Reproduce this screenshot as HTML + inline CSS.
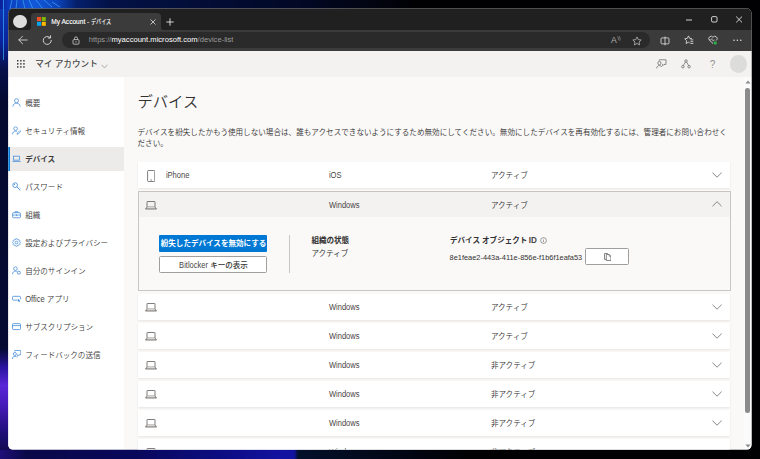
<!DOCTYPE html>
<html lang="ja">
<head>
<meta charset="utf-8">
<title>My Account - デバイス</title>
<style>
*{box-sizing:border-box;margin:0;padding:0}
html,body{width:760px;height:459px;overflow:hidden}
body{position:relative;background:#010103;font-family:"Liberation Sans","Noto Sans CJK JP",sans-serif;color:#323130}
.abs{position:absolute}
#desk{position:absolute;left:0;top:0;width:760px;height:459px;overflow:hidden}
#win{position:absolute;left:8px;top:8px;width:743.5px;height:441.5px;overflow:hidden;background:#faf9f8;clip-path:inset(0.6px 0 0 0.3px round 4.5px)}
/* everything inside #win is positioned relative to window (offset 8,8) */
#tabstrip{position:absolute;left:0;top:0;width:744px;height:22px;background:#202020}
#toolbar{position:absolute;left:0;top:22px;width:744px;height:20.8px;background:#3b3b3b}
#tab{position:absolute;left:23px;top:4.8px;width:130.2px;height:18px;background:#3b3b3b;border-radius:4px 4px 0 0}
.t{position:absolute;white-space:nowrap;line-height:1}
#apphdr{position:absolute;left:0;top:42.8px;width:744px;height:26.4px;background:#f3f2f1}
#side{position:absolute;left:0;top:69.2px;width:116.4px;height:373px;background:#fff}
#main{position:absolute;left:116.4px;top:69.2px;width:619.5px;height:373px;background:#faf9f8}
#sbar{position:absolute;left:735.5px;top:69.2px;width:8.5px;height:373px;background:#fbfbfb}
.nav{position:absolute;left:0;width:116px;height:24px}
.nav .t{left:17.2px;top:9.1px;font-size:7.55px;color:#3b3a39;font-weight:350}
.nav svg{position:absolute;left:4.3px;top:7.3px;width:9px;height:9px}
.card{position:absolute;left:129.9px;width:592.1px;height:25.8px;background:#fff;box-shadow:0 0.3px 0.9px rgba(0,0,0,.10),0 0.8px 1.8px rgba(0,0,0,.08)}
.card .t{top:10.3px;font-size:7.55px;color:#323130;font-weight:350}
.lo .t{top:10.4px !important}
.lat{color:#484644;display:inline-block;transform:scaleY(1.1);transform-origin:50% 78%}
.c1{left:28px}.c2{left:191px}.c3{left:353px}
.card svg.chev{position:absolute;left:573.8px;top:10.1px;width:10px;height:6px}
.lo svg.chev{top:9.8px}
.card svg.lap{position:absolute;left:7.3px;top:9.5px;width:12px;height:9px}
</style>
</head>
<body>
<div id="desk">
  <svg class="abs" style="left:0;top:0" width="760" height="459" viewBox="0 0 760 459">
    <defs>
      <linearGradient id="gtop" gradientUnits="userSpaceOnUse" x1="0" y1="0" x2="760" y2="0">
        <stop offset="0" stop-color="#0a1f9a"/><stop offset="0.013" stop-color="#0b3fc0"/><stop offset="0.045" stop-color="#1358da"/><stop offset="0.075" stop-color="#0c44bc"/>
        <stop offset="0.1" stop-color="#05206c"/><stop offset="0.145" stop-color="#031146"/><stop offset="0.4" stop-color="#020824"/><stop offset="0.55" stop-color="#010103"/><stop offset="1" stop-color="#010103"/>
      </linearGradient>
      <linearGradient id="gleft" gradientUnits="userSpaceOnUse" x1="0" y1="0" x2="0" y2="459">
        <stop offset="0" stop-color="#0b3ab8"/><stop offset="0.09" stop-color="#0a24a0"/><stop offset="0.15" stop-color="#06104c"/><stop offset="0.22" stop-color="#040a30"/>
        <stop offset="0.76" stop-color="#050a32"/><stop offset="0.8" stop-color="#2a14a0"/><stop offset="0.84" stop-color="#5a26d8"/><stop offset="0.89" stop-color="#4119b2"/><stop offset="0.95" stop-color="#1c0d70"/><stop offset="1" stop-color="#0a0840"/>
      </linearGradient>
      <linearGradient id="gbot" gradientUnits="userSpaceOnUse" x1="0" y1="0" x2="760" y2="0">
        <stop offset="0" stop-color="#1e0e78"/><stop offset="0.035" stop-color="#0a0848"/><stop offset="0.18" stop-color="#08085c"/><stop offset="0.3" stop-color="#0d0d86"/><stop offset="0.375" stop-color="#1313a2"/><stop offset="0.387" stop-color="#1212a0"/>
        <stop offset="0.392" stop-color="#03102a"/><stop offset="0.53" stop-color="#020614"/><stop offset="0.62" stop-color="#010103"/><stop offset="1" stop-color="#010103"/>
      </linearGradient>
    </defs>
    <rect x="0" y="0" width="760" height="459" fill="#010103"/>
    <rect x="0" y="0" width="760" height="12" fill="url(#gtop)"/>
    <rect x="0" y="446" width="760" height="13" fill="url(#gbot)"/>
    <rect x="0" y="9" width="12" height="441" fill="url(#gleft)"/>
    <g stroke="#38a0f0" stroke-width="0.9" fill="none" opacity="0.85">
      <path d="M3.5 0V60"/><path d="M12 0L10 9"/><path d="M17 0L16 9"/><path d="M23 0L25 9"/><path d="M29 0L33 9"/><path d="M36 0L43 9"/><path d="M44 0L52 7"/><path d="M52 2L60 7"/>
    </g>
  </svg>
</div>

<div id="win">
  <div id="tabstrip"></div>
  <div id="toolbar"></div>
  <!-- profile circle -->
  <div class="abs" style="left:5.1px;top:6.8px;width:13.5px;height:13.5px;border-radius:50%;background:#dcdcdc"></div>
  <div id="tab"></div>
  <svg class="abs" style="left:20px;top:19px" width="3" height="3" viewBox="0 0 3 3"><path d="M3 0V3H0A3 3 0 0 0 3 0Z" fill="#3b3b3b"/></svg>
  <svg class="abs" style="left:153.2px;top:19px" width="3" height="3" viewBox="0 0 3 3"><path d="M0 0V3H3A3 3 0 0 1 0 0Z" fill="#3b3b3b"/></svg>
  <!-- favicon -->
  <svg class="abs" style="left:29px;top:9px" width="9" height="9" viewBox="0 0 9 9">
    <rect x="0" y="0" width="4" height="4" fill="#f25022"/><rect x="4.8" y="0" width="4" height="4" fill="#7fba00"/>
    <rect x="0" y="4.8" width="4" height="4" fill="#00a4ef"/><rect x="4.8" y="4.8" width="4" height="4" fill="#ffb900"/>
  </svg>
  <div class="t" style="left:43.2px;top:11px;font-size:6.6px;color:#fff;-webkit-text-stroke:0.12px #fff">My Account - <span style="display:inline-block;transform:scaleX(0.77);transform-origin:0 50%">デバイス</span></div>
  <svg class="abs" style="left:141.6px;top:10.7px" width="6" height="6" viewBox="0 0 6 6"><path d="M0.5 0.5L5.5 5.5M5.5 0.5L0.5 5.5" stroke="#e0e0e0" stroke-width="0.8" fill="none"/></svg>
  <svg class="abs" style="left:158.3px;top:9.6px" width="8" height="8" viewBox="0 0 8 8"><path d="M4 0.3V7.7M0.3 4H7.7" stroke="#e8e8e8" stroke-width="0.9" fill="none"/></svg>
  <!-- window controls -->
  <svg class="abs" style="left:677px;top:7px" width="60" height="10" viewBox="0 0 60 10">
    <path d="M1 5H7" stroke="#fff" stroke-width="0.8" fill="none"/>
    <rect x="26.6" y="1.6" width="5.4" height="5.4" rx="1.1" stroke="#fff" stroke-width="0.8" fill="none"/>
    <path d="M51.2 1.6L57 7.4M57 1.6L51.2 7.4" stroke="#fff" stroke-width="0.8" fill="none"/>
  </svg>

  <!-- toolbar icons -->
  <svg class="abs" style="left:10px;top:27px" width="10" height="10" viewBox="0 0 10 10"><path d="M0.8 5H9.2M4.6 1.2L0.8 5L4.6 8.8" stroke="#d4d4d4" stroke-width="0.9" fill="none" stroke-linecap="round" stroke-linejoin="round"/></svg>
  <svg class="abs" style="left:33.7px;top:27.2px" width="10.8" height="10.8" viewBox="0 0 10 10"><path d="M8.6 5A3.7 3.7 0 1 1 7.3 2.2" stroke="#d4d4d4" stroke-width="0.9" fill="none" stroke-linecap="round"/><path d="M7.9 0.7V2.8H5.8" stroke="#d4d4d4" stroke-width="0.9" fill="none" stroke-linecap="round" stroke-linejoin="round"/></svg>
  <!-- address bar -->
  <div class="abs" style="left:54.3px;top:24.2px;width:587.5px;height:16px;border-radius:8px;background:#2a2a2a"></div>
  <svg class="abs" style="left:63.7px;top:27.7px" width="8" height="9" viewBox="0 0 8 9"><rect x="1" y="3.6" width="6" height="4.6" rx="1" stroke="#d0d0d0" stroke-width="0.8" fill="none"/><path d="M2.5 3.6V2.4A1.5 1.5 0 0 1 5.5 2.4V3.6" stroke="#d0d0d0" stroke-width="0.8" fill="none"/><circle cx="4" cy="5.9" r="0.6" fill="#d0d0d0"/></svg>
  <div class="t" style="left:80.7px;top:28.2px;font-size:7.6px;color:#9a9a9a">https://<span style="color:#fff">myaccount.microsoft.com</span>/device-list</div>
  <!-- read aloud A -->
  <div class="t" style="left:603px;top:28px;font-size:8.6px;color:#b4b4b4">A</div><svg class="abs" style="left:608.5px;top:27.5px" width="4" height="5" viewBox="0 0 4 5"><path d="M0.6 0.8C1.4 1.6 1.6 2.6 1.3 3.8M2 0.2C3.2 1.4 3.4 2.8 3 4.4" stroke="#b4b4b4" stroke-width="0.55" fill="none" stroke-linecap="round"/></svg>
  <svg class="abs" style="left:623.6px;top:28.2px" width="10" height="10" viewBox="0 0 11 11"><path d="M5.5 1L6.9 4L10.1 4.4L7.7 6.6L8.4 9.8L5.5 8.2L2.6 9.8L3.3 6.6L0.9 4.4L4.1 4Z" stroke="#bdbdbd" stroke-width="0.85" fill="none" stroke-linejoin="round"/></svg>
  <!-- split -->
  <svg class="abs" style="left:651.7px;top:27.6px" width="10" height="10" viewBox="0 0 10 10"><rect x="1" y="1.9" width="8" height="6" rx="1.1" stroke="#dcdcdc" stroke-width="0.85" fill="none"/><path d="M5 0.5V9.3" stroke="#dcdcdc" stroke-width="0.85"/></svg>
  <!-- favorites -->
  <svg class="abs" style="left:675.6px;top:27.4px" width="12" height="11" viewBox="0 0 12 11"><path d="M7.6 3.6L5.7 3.4L4.5 0.9L3.3 3.4L0.7 3.8L2.6 5.7L2.1 8.5L4.5 7.2L5.4 7.7" stroke="#e0e0e0" stroke-width="0.85" fill="none" stroke-linejoin="round" stroke-linecap="round"/><path d="M6.4 4.9H9.3M6.4 6.7H9.3M6.4 8.5H9.3" stroke="#e0e0e0" stroke-width="0.8"/></svg>
  <!-- heart -->
  <svg class="abs" style="left:699.6px;top:27.4px" width="11" height="11" viewBox="0 0 11 11"><path d="M5 8.6L1.2 4.9A2.2 2.2 0 0 1 5 2.3A2.2 2.2 0 0 1 8.8 4.9L8.2 5.5" stroke="#e0e0e0" stroke-width="0.85" fill="none" stroke-linejoin="round"/><path d="M1 5H3L3.9 3.6L5 6.2L5.8 5H6.8" stroke="#e0e0e0" stroke-width="0.55" fill="none"/><circle cx="7.2" cy="8" r="1.8" fill="#2fa84a"/></svg>
  <!-- more -->
  <svg class="abs" style="left:724.8px;top:31px" width="9" height="3" viewBox="0 0 9 3"><circle cx="1" cy="1.3" r="0.75" fill="#e6e6e6"/><circle cx="4.4" cy="1.3" r="0.75" fill="#e6e6e6"/><circle cx="7.8" cy="1.3" r="0.75" fill="#e6e6e6"/></svg>

  <!-- app header -->
  <div id="apphdr"></div>
  <svg class="abs" style="left:8.5px;top:52px" width="8" height="8" viewBox="0 0 8 8" fill="#3b3a39">
    <rect x="0" y="0" width="1.5" height="1.5"/><rect x="3.1" y="0" width="1.5" height="1.5"/><rect x="6.2" y="0" width="1.5" height="1.5"/>
    <rect x="0" y="3.1" width="1.5" height="1.5"/><rect x="3.1" y="3.1" width="1.5" height="1.5"/><rect x="6.2" y="3.1" width="1.5" height="1.5"/>
    <rect x="0" y="6.2" width="1.5" height="1.5"/><rect x="3.1" y="6.2" width="1.5" height="1.5"/><rect x="6.2" y="6.2" width="1.5" height="1.5"/>
  </svg>
  <div class="t" style="left:27.2px;top:52px;font-size:8.6px;font-weight:500;color:#4a4948">マイ アカウント</div>
  <svg class="abs" style="left:93px;top:55.5px" width="7" height="5" viewBox="0 0 7 5"><path d="M0.5 0.7L3.5 3.9L6.5 0.7" stroke="#8a8886" stroke-width="0.7" fill="none"/></svg>
  <!-- header right icons -->
  <svg class="abs" style="left:647.6px;top:51.4px" width="11" height="10" viewBox="0 0 11 10"><circle cx="3.4" cy="4.1" r="1.6" stroke="#605e5c" stroke-width="0.7" fill="none"/><path d="M0.6 9.4C0.9 7.4 2 6.6 3.4 6.6C4.6 6.6 5.4 7.1 5.9 8" stroke="#605e5c" stroke-width="0.7" fill="none"/><path d="M3.2 1.6V0.8H10V5.4H8L6.6 6.8V5.4H6" stroke="#605e5c" stroke-width="0.7" fill="none" stroke-linejoin="round"/></svg>
  <svg class="abs" style="left:673.4px;top:51.4px" width="10" height="10" viewBox="0 0 10 10"><circle cx="5" cy="2" r="1.25" stroke="#605e5c" stroke-width="0.7" fill="none"/><circle cx="1.9" cy="7.7" r="1.25" stroke="#605e5c" stroke-width="0.7" fill="none"/><circle cx="8.1" cy="7.7" r="1.25" stroke="#605e5c" stroke-width="0.7" fill="none"/><path d="M4.4 3.1L2.4 6.5M5.6 3.1L7.6 6.5" stroke="#605e5c" stroke-width="0.7" fill="none"/></svg>
  <div class="t" style="left:701.8px;top:51.6px;font-size:10px;color:#95928f">?</div>
  <div class="abs" style="left:721.7px;top:47.4px;width:17.7px;height:17.7px;border-radius:50%;background:#dcdcdb"></div>

  <!-- sidebar -->
  <div id="side">
    <div class="nav" style="top:13.5px"><svg viewBox="0 0 10 10"><circle cx="5" cy="3" r="2.2" stroke="#2f80d6" stroke-width="0.75" fill="none"/><path d="M1 9.6C1 7 2.8 5.8 5 5.8S9 7 9 9.6" stroke="#2f80d6" stroke-width="0.75" fill="none"/></svg><div class="t">概要</div></div>
    <div class="nav" style="top:41.5px"><svg viewBox="0 0 10 10"><circle cx="4" cy="3" r="2" stroke="#2f80d6" stroke-width="0.75" fill="none"/><path d="M0.6 9.2C0.6 7 2 5.8 4 5.8C4.6 5.8 5 5.9 5.4 6" stroke="#2f80d6" stroke-width="0.75" fill="none"/><path d="M5.6 9.4L6 7.8L8.8 5L9.8 6L7 8.8Z" stroke="#2f80d6" stroke-width="0.7" fill="none" stroke-linejoin="round"/></svg><div class="t">セキュリティ情報</div></div>
    <div class="nav" style="top:69.5px;background:#edebe9"><div class="abs" style="left:0;top:0;width:2px;height:24px;background:#0078d4"></div><svg viewBox="0 0 10 10"><rect x="1.6" y="2.4" width="6.8" height="4.4" stroke="#2f80d6" stroke-width="0.75" fill="none"/><path d="M0.4 8.3H9.6" stroke="#2f80d6" stroke-width="0.75"/></svg><div class="t" style="font-weight:bold">デバイス</div></div>
    <div class="nav" style="top:97.5px"><svg viewBox="0 0 10 10"><circle cx="3.5" cy="3.5" r="2.6" stroke="#2f80d6" stroke-width="0.85" fill="none"/><circle cx="2.8" cy="2.8" r="0.6" fill="#2f80d6"/><path d="M5.4 5.4L9.2 9.2M7.2 7.2L8.2 6.2M8.4 8.4L9.3 7.5" stroke="#2f80d6" stroke-width="0.85" fill="none"/></svg><div class="t">パスワード</div></div>
    <div class="nav" style="top:125.5px"><svg viewBox="0 0 10 10"><rect x="0.7" y="3" width="8.6" height="5.6" rx="0.9" stroke="#2f80d6" stroke-width="0.8" fill="none"/><path d="M3.5 3V1.8H6.5V3M0.7 5.6H4.2M5.8 5.6H9.3" stroke="#2f80d6" stroke-width="0.75" fill="none"/><rect x="4.2" y="4.9" width="1.6" height="1.5" fill="#2f80d6"/></svg><div class="t">組織</div></div>
    <div class="nav" style="top:153.5px"><svg viewBox="0 0 10 10"><circle cx="5" cy="5" r="1.5" stroke="#2f80d6" stroke-width="0.75" fill="none"/><path d="M5 0.8L6.2 1.1L6.7 2.2L7.9 2.1L8.8 3L8.6 4.2L9.4 5L8.6 5.8L8.8 7L7.9 7.9L6.7 7.8L6.2 8.9L5 9.2L3.8 8.9L3.3 7.8L2.1 7.9L1.2 7L1.4 5.8L0.6 5L1.4 4.2L1.2 3L2.1 2.1L3.3 2.2L3.8 1.1Z" stroke="#2f80d6" stroke-width="0.75" fill="none" stroke-linejoin="round"/></svg><div class="t">設定およびプライバシー</div></div>
    <div class="nav" style="top:181.5px"><svg viewBox="0 0 10 10"><circle cx="3.8" cy="2.9" r="2" stroke="#2f80d6" stroke-width="0.75" fill="none"/><path d="M0.5 9.2C0.5 7 1.9 5.8 3.8 5.8C4.5 5.8 5 5.9 5.4 6.1" stroke="#2f80d6" stroke-width="0.75" fill="none"/><circle cx="7.6" cy="7.4" r="1.7" stroke="#2f80d6" stroke-width="0.8" fill="none"/></svg><div class="t">自分のサインイン</div></div>
    <div class="nav" style="top:209.5px"><svg viewBox="0 0 10 10"><path d="M5.6 6.8H1.6A1 1 0 0 1 0.6 5.8V3.6A1 1 0 0 1 1.6 2.6H8.4A1 1 0 0 1 9.4 3.6V5.8" stroke="#2f80d6" stroke-width="0.8" fill="none"/><path d="M6.4 5.2V8.6L7.3 7.9L8 9.3L8.7 9L8.1 7.6H9.2Z" fill="#2f80d6"/></svg><div class="t"><span class="lat">Office</span> アプリ</div></div>
    <div class="nav" style="top:237.5px"><svg viewBox="0 0 10 10"><rect x="0.6" y="1.8" width="8.8" height="6.6" rx="1" stroke="#2f80d6" stroke-width="0.8" fill="none"/><path d="M0.6 4H9.4" stroke="#2f80d6" stroke-width="0.8"/></svg><div class="t">サブスクリプション</div></div>
    <div class="nav" style="top:265.5px"><svg viewBox="0 0 10 10"><circle cx="3.2" cy="4.4" r="1.7" stroke="#2f80d6" stroke-width="0.75" fill="none"/><path d="M0.4 10C0.4 7.9 1.6 7 3.2 7C4.4 7 5.2 7.5 5.7 8.4" stroke="#2f80d6" stroke-width="0.75" fill="none"/><path d="M3 1.6V0.6H9.7V5.4H7.6L6.2 6.9V5.4H5.6" stroke="#2f80d6" stroke-width="0.75" fill="none" stroke-linejoin="round"/></svg><div class="t">フィードバックの送信</div></div>
  </div>

  <!-- main -->
  <div id="main"></div>
  <div class="t" style="left:129.5px;top:85.5px;font-size:15.3px;font-weight:350;color:#323130">デバイス</div>
  <div class="t" style="left:129.5px;top:120px;font-size:7.55px;line-height:10.9px;letter-spacing:0.03px;font-weight:350;color:#323130;white-space:normal;width:594px">デバイスを紛失したかもう使用しない場合は、誰もアクセスできないようにするため無効にしてください。無効にしたデバイスを再有効化するには、管理者にお問い合わせください。</div>

  <!-- row 1 -->
  <div class="card" style="top:154.2px">
    <svg class="abs" style="left:8.8px;top:7.4px" width="8.4" height="12" viewBox="0 0 8.4 12"><rect x="0.6" y="0.5" width="7.2" height="11" rx="0.9" stroke="#55524f" stroke-width="0.75" fill="none"/><path d="M3.4 10H5" stroke="#55524f" stroke-width="0.7"/></svg>
    <div class="t c1"><span class="lat">iPhone</span></div><div class="t c2"><span class="lat">iOS</span></div><div class="t c3">アクティブ</div>
    <svg class="chev" viewBox="0 0 10 6"><path d="M0.5 0.7L5.05 5.2L9.6 0.7" stroke="#605e5c" stroke-width="0.75" fill="none"/></svg>
  </div>
  <!-- expanded -->
  <div class="abs" style="left:130px;top:182.5px;width:593px;height:100.5px;background:#faf9f8;border:1px solid #c8c6c4">
    <div class="abs" style="left:0;top:0;width:591px;height:25.5px;background:#f3f2f1"></div>
  </div>
  <div class="card" style="top:183.5px;background:none;box-shadow:none">
    <svg class="lap" viewBox="0 0 12 9"><rect x="2" y="0.5" width="8" height="5.6" rx="0.4" stroke="#55524f" stroke-width="0.75" fill="none"/><path d="M2 6.1L0.5 8H11.5L10 6.1" stroke="#55524f" stroke-width="0.75" fill="#d8d6d4" stroke-linejoin="round"/></svg>
    <div class="t c2"><span class="lat">Windows</span></div><div class="t c3">アクティブ</div>
    <svg class="chev" style="top:9.7px" viewBox="0 0 10 6"><path d="M0.5 5.2L5.05 0.7L9.6 5.2" stroke="#605e5c" stroke-width="0.75" fill="none"/></svg>
  </div>
  <div class="abs" style="left:151.3px;top:226.5px;width:108.2px;height:17px;background:#0078d4;border-radius:1px"></div>
  <div class="t" style="left:151.5px;top:231.6px;width:108px;text-align:center;font-size:7.55px;font-weight:bold;color:#fff">紛失したデバイスを無効にする</div>
  <div class="abs" style="left:151.3px;top:248.2px;width:108.2px;height:16.8px;background:#fff;border:0.9px solid #a19f9d;border-radius:1.5px"></div>
  <div class="t" style="left:151.5px;top:253.6px;width:108px;text-align:center;font-size:7.55px;font-weight:500;color:#323130"><span class="lat">Bitlocker</span> キーの表示</div>
  <div class="abs" style="left:280.5px;top:226.5px;width:1px;height:38.5px;background:#c8c6c4"></div>
  <div class="t" style="left:303.4px;top:228.5px;font-size:7.55px;font-weight:bold;color:#323130">組織の状態</div>
  <div class="t" style="left:303.4px;top:242.3px;font-size:7.55px;color:#323130">アクティブ</div>
  <div class="t" style="left:442px;top:229px;font-size:7.55px;font-weight:bold;color:#323130">デバイス オブジェクト <span class="lat" style="transform:scale(1.08,1.15)">ID</span></div>
  <svg class="abs" style="left:531.5px;top:228.5px" width="7" height="7" viewBox="0 0 7 7"><circle cx="3.5" cy="3.5" r="2.9" stroke="#605e5c" stroke-width="0.6" fill="none"/><path d="M3.5 3.1V5.1" stroke="#605e5c" stroke-width="0.6"/><circle cx="3.5" cy="2.1" r="0.4" fill="#605e5c"/></svg>
  <div class="t" style="left:441.6px;top:245.6px;font-size:7.4px;color:#323130">8e1feae2-443a-411e-856e-f1b6f1eafa53</div>
  <div class="abs" style="left:577.4px;top:240px;width:43.4px;height:17.4px;background:#fff;border:0.9px solid #a19f9d;border-radius:1.5px"></div>
  <svg class="abs" style="left:595.8px;top:244.8px" width="7.4" height="8" viewBox="0 0 7.4 8"><path d="M2.2 6.4H0.5V0.5H3.6L4.4 1.3" stroke="#484644" stroke-width="0.65" fill="none" stroke-linejoin="round"/><path d="M2.3 1.5H5.2L6.9 3.2V7.5H2.3Z" stroke="#484644" stroke-width="0.65" fill="#fff" stroke-linejoin="round"/><path d="M5.2 1.5V3.2H6.9" stroke="#484644" stroke-width="0.5" fill="none"/></svg>

  <!-- rows 3..8 -->
  <div class="card lo" style="top:285.9px"><svg class="lap" viewBox="0 0 12 9"><rect x="2" y="0.5" width="8" height="5.6" rx="0.4" stroke="#55524f" stroke-width="0.75" fill="none"/><path d="M2 6.1L0.5 8H11.5L10 6.1" stroke="#55524f" stroke-width="0.75" fill="#d8d6d4" stroke-linejoin="round"/></svg><div class="t c2"><span class="lat">Windows</span></div><div class="t c3">アクティブ</div><svg class="chev" viewBox="0 0 10 6"><path d="M0.5 0.7L5.05 5.2L9.6 0.7" stroke="#605e5c" stroke-width="0.75" fill="none"/></svg></div>
  <div class="card lo" style="top:314.9px"><svg class="lap" viewBox="0 0 12 9"><rect x="2" y="0.5" width="8" height="5.6" rx="0.4" stroke="#55524f" stroke-width="0.75" fill="none"/><path d="M2 6.1L0.5 8H11.5L10 6.1" stroke="#55524f" stroke-width="0.75" fill="#d8d6d4" stroke-linejoin="round"/></svg><div class="t c2"><span class="lat">Windows</span></div><div class="t c3">アクティブ</div><svg class="chev" viewBox="0 0 10 6"><path d="M0.5 0.7L5.05 5.2L9.6 0.7" stroke="#605e5c" stroke-width="0.75" fill="none"/></svg></div>
  <div class="card lo" style="top:343.9px"><svg class="lap" viewBox="0 0 12 9"><rect x="2" y="0.5" width="8" height="5.6" rx="0.4" stroke="#55524f" stroke-width="0.75" fill="none"/><path d="M2 6.1L0.5 8H11.5L10 6.1" stroke="#55524f" stroke-width="0.75" fill="#d8d6d4" stroke-linejoin="round"/></svg><div class="t c2"><span class="lat">Windows</span></div><div class="t c3">非アクティブ</div><svg class="chev" viewBox="0 0 10 6"><path d="M0.5 0.7L5.05 5.2L9.6 0.7" stroke="#605e5c" stroke-width="0.75" fill="none"/></svg></div>
  <div class="card lo" style="top:372.9px"><svg class="lap" viewBox="0 0 12 9"><rect x="2" y="0.5" width="8" height="5.6" rx="0.4" stroke="#55524f" stroke-width="0.75" fill="none"/><path d="M2 6.1L0.5 8H11.5L10 6.1" stroke="#55524f" stroke-width="0.75" fill="#d8d6d4" stroke-linejoin="round"/></svg><div class="t c2"><span class="lat">Windows</span></div><div class="t c3">非アクティブ</div><svg class="chev" viewBox="0 0 10 6"><path d="M0.5 0.7L5.05 5.2L9.6 0.7" stroke="#605e5c" stroke-width="0.75" fill="none"/></svg></div>
  <div class="card lo" style="top:401.9px"><svg class="lap" viewBox="0 0 12 9"><rect x="2" y="0.5" width="8" height="5.6" rx="0.4" stroke="#55524f" stroke-width="0.75" fill="none"/><path d="M2 6.1L0.5 8H11.5L10 6.1" stroke="#55524f" stroke-width="0.75" fill="#d8d6d4" stroke-linejoin="round"/></svg><div class="t c2"><span class="lat">Windows</span></div><div class="t c3">非アクティブ</div><svg class="chev" viewBox="0 0 10 6"><path d="M0.5 0.7L5.05 5.2L9.6 0.7" stroke="#605e5c" stroke-width="0.75" fill="none"/></svg></div>
  <div class="card lo" style="top:430.9px"><svg class="lap" viewBox="0 0 12 9"><rect x="2" y="0.5" width="8" height="5.6" rx="0.4" stroke="#55524f" stroke-width="0.75" fill="none"/><path d="M2 6.1L0.5 8H11.5L10 6.1" stroke="#55524f" stroke-width="0.75" fill="#d8d6d4" stroke-linejoin="round"/></svg><div class="t c2"><span class="lat">Windows</span></div><div class="t c3">非アクティブ</div></div>

  <!-- scrollbar -->
  <div id="sbar"></div>
  <div class="abs" style="left:737.15px;top:79.6px;width:4.6px;height:325px;background:#8b8b8b;border-radius:2.3px"></div>
  <svg class="abs" style="left:737px;top:71.5px" width="6" height="4" viewBox="0 0 6 4"><path d="M0.4 3.6L3 0.4L5.6 3.6Z" fill="#8b8b8b"/></svg>
  <svg class="abs" style="left:737px;top:436px" width="6" height="4" viewBox="0 0 6 4"><path d="M0.4 0.4L3 3.6L5.6 0.4Z" fill="#8b8b8b"/></svg>
</div>
</body>
</html>
